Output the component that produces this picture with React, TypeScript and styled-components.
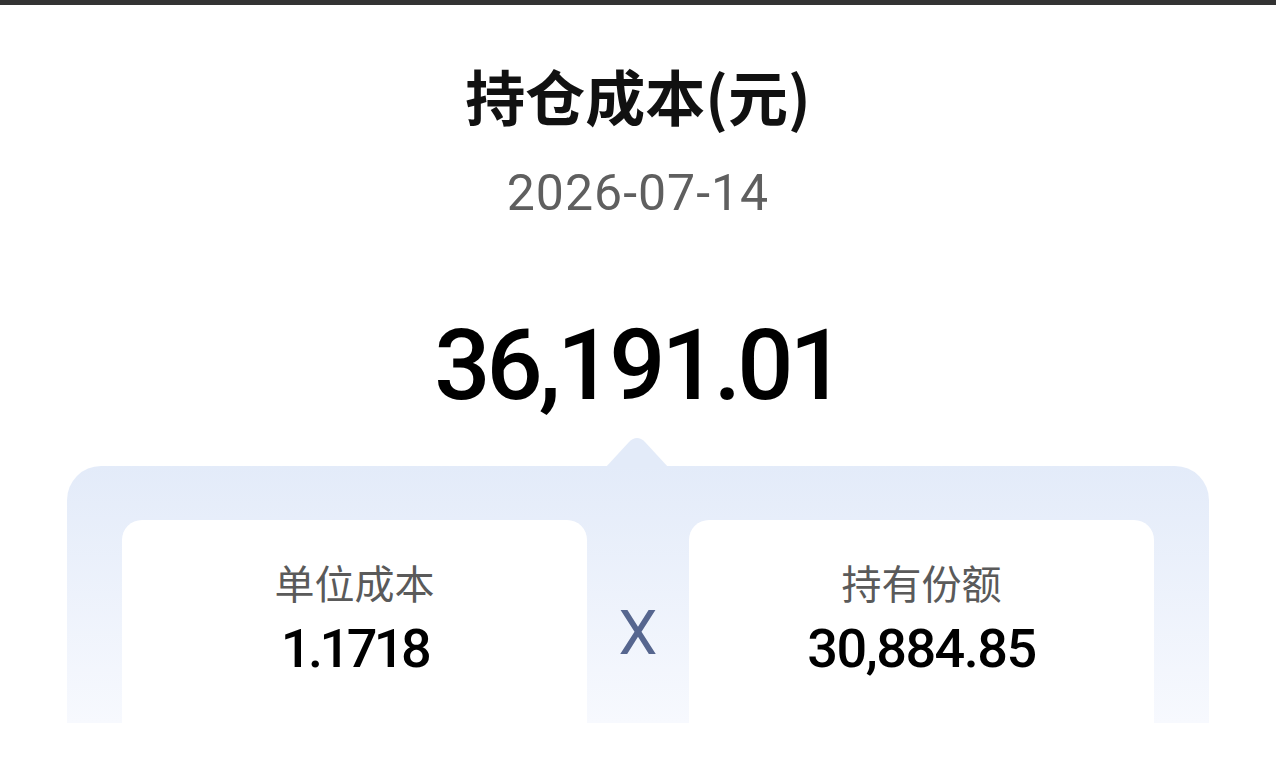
import React from "react";
import styled, { createGlobalStyle } from "styled-components";

const Global = createGlobalStyle`
  html, body { margin: 0; padding: 0; background: #ffffff; }
  body { font-family: "Noto Sans CJK SC", "Noto Sans", sans-serif; }
`;

const Page = styled.div`
  width: 1276px;
  height: 757px;
  overflow: hidden;
  display: flex;
  flex-direction: column;
  align-items: center;
  background: #fff;
`;

const TopBar = styled.div`
  align-self: stretch;
  height: 5px;
  background: #333333;
`;

const Title = styled.h1`
  margin: 60px 0 0;
  font-family: "Noto Sans CJK SC", sans-serif;
  font-size: 60px;
  line-height: 60px;
  font-weight: 700;
  color: #111;
`;

const DateText = styled.div`
  margin-top: 43px;
  font-family: Roboto, "Noto Sans", sans-serif;
  font-size: 50px;
  line-height: 50px;
  color: #5f5f5f;
  letter-spacing: 1px;
`;

const Amount = styled.div`
  margin-top: 97px;
  font-family: Roboto, "Noto Sans", sans-serif;
  font-size: 99px;
  line-height: 100px;
  font-weight: 500;
  color: #000;
  letter-spacing: -4px;
`;

const Panel = styled.div`
  position: relative;
  margin-top: 51px;
  width: 1142px;
  height: 257px;
  box-sizing: border-box;
  padding: 54px 55px 0;
  border-radius: 34px 34px 0 0;
  background: linear-gradient(180deg, #e3ebf9 0%, #f7f9fe 100%);
  display: grid;
  grid-template-columns: 1fr 102px 1fr;
`;

const Notch = styled.svg`
  position: absolute;
  top: -29px;
  left: 539px;
  width: 62px;
  height: 30px;
`;

const Card = styled.div`
  background: #ffffff;
  border-radius: 20px 20px 0 0;
  display: flex;
  flex-direction: column;
  align-items: center;
  padding-top: 42px;
`;

const Label = styled.div`
  font-family: "Noto Sans CJK SC", sans-serif;
  font-size: 40px;
  line-height: 40px;
  color: #5a5a5a;
`;

const Value = styled.div<{ $tight?: boolean }>`
  margin-top: 20px;
  font-family: Roboto, "Noto Sans", sans-serif;
  font-size: 54px;
  line-height: 54px;
  font-weight: 500;
  color: #000;
  letter-spacing: ${(p) => (p.$tight ? "-3.5px" : "-1.5px")};
`;

const Times = styled.div`
  display: flex;
  justify-content: center;
  padding-top: 86px;
  font-family: Roboto, "Noto Sans", sans-serif;
  font-size: 62px;
  line-height: 54px;
  color: #56668f;
`;

export default function App() {
  return (
    <>
      <Global />
      <Page>
        <TopBar />
        <Title>持仓成本(元)</Title>
        <DateText>2026-07-14</DateText>
        <Amount>36,191.01</Amount>
        <Panel>
          <Notch viewBox="0 0 62 30">
            <path d="M0 30 L23 5 Q31 -3 39 5 L62 30 Z" fill="#e3ebf9" />
          </Notch>
          <Card>
            <Label>单位成本</Label>
            <Value $tight>1.1718</Value>
          </Card>
          <Times>X</Times>
          <Card>
            <Label>持有份额</Label>
            <Value>30,884.85</Value>
          </Card>
        </Panel>
      </Page>
    </>
  );
}
